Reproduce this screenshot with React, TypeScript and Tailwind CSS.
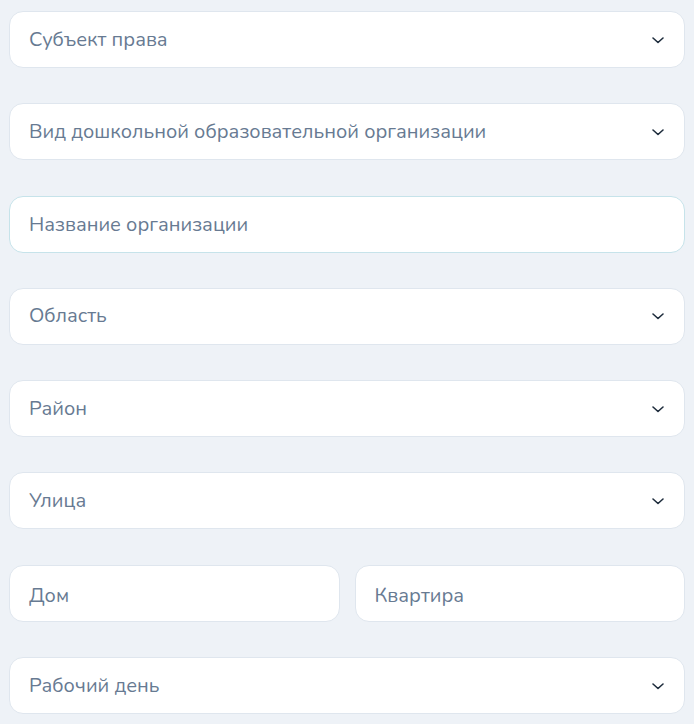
import React from "react";

const font = { fontFamily: '"Nunito", "Noto Sans", "Open Sans", sans-serif' };

function Chevron() {
  return (
    <svg width="14" height="14" viewBox="0 0 14 14" fill="none" className="shrink-0">
      <path d="M2 5 L7 9.5 L12 5" stroke="#1f2d3d" strokeWidth="1.6" strokeLinecap="round" strokeLinejoin="round" />
    </svg>
  );
}

function Select({ label }: { label: string }) {
  return (
    <div className="h-[57px] bg-white border border-[#dfe6ee] rounded-[14px] flex items-center justify-between pl-[19px] pr-[19px]">
      <span className="text-[20px] text-[#677a92]">{label}</span>
      <Chevron />
    </div>
  );
}

function Input({ label, accent = false, grow = false }: { label: string; accent?: boolean; grow?: boolean }) {
  return (
    <div
      className={`h-[57px] bg-white border rounded-[14px] flex items-center pl-[19px] ${grow ? "flex-1 pt-[5px]" : "pt-[2px]"} ${
        accent ? "border-[#c6e3ea]" : "border-[#dfe6ee]"
      }`}
    >
      <span className="text-[20px] text-[#677a92]">{label}</span>
    </div>
  );
}

export default function App() {
  return (
    <div className="min-h-[724px] bg-[#eef2f7] px-[9px] pt-[11px]" style={font}>
      <div className="flex flex-col gap-[35.3px]">
        <Select label="Субъект права" />
        <Select label="Вид дошкольной образовательной организации" />
        <Input label="Название организации" accent />
        <Select label="Область" />
        <Select label="Район" />
        <Select label="Улица" />
        <div className="flex gap-[15px]">
          <Input label="Дом" grow />
          <Input label="Квартира" grow />
        </div>
        <Select label="Рабочий день" />
      </div>
    </div>
  );
}
